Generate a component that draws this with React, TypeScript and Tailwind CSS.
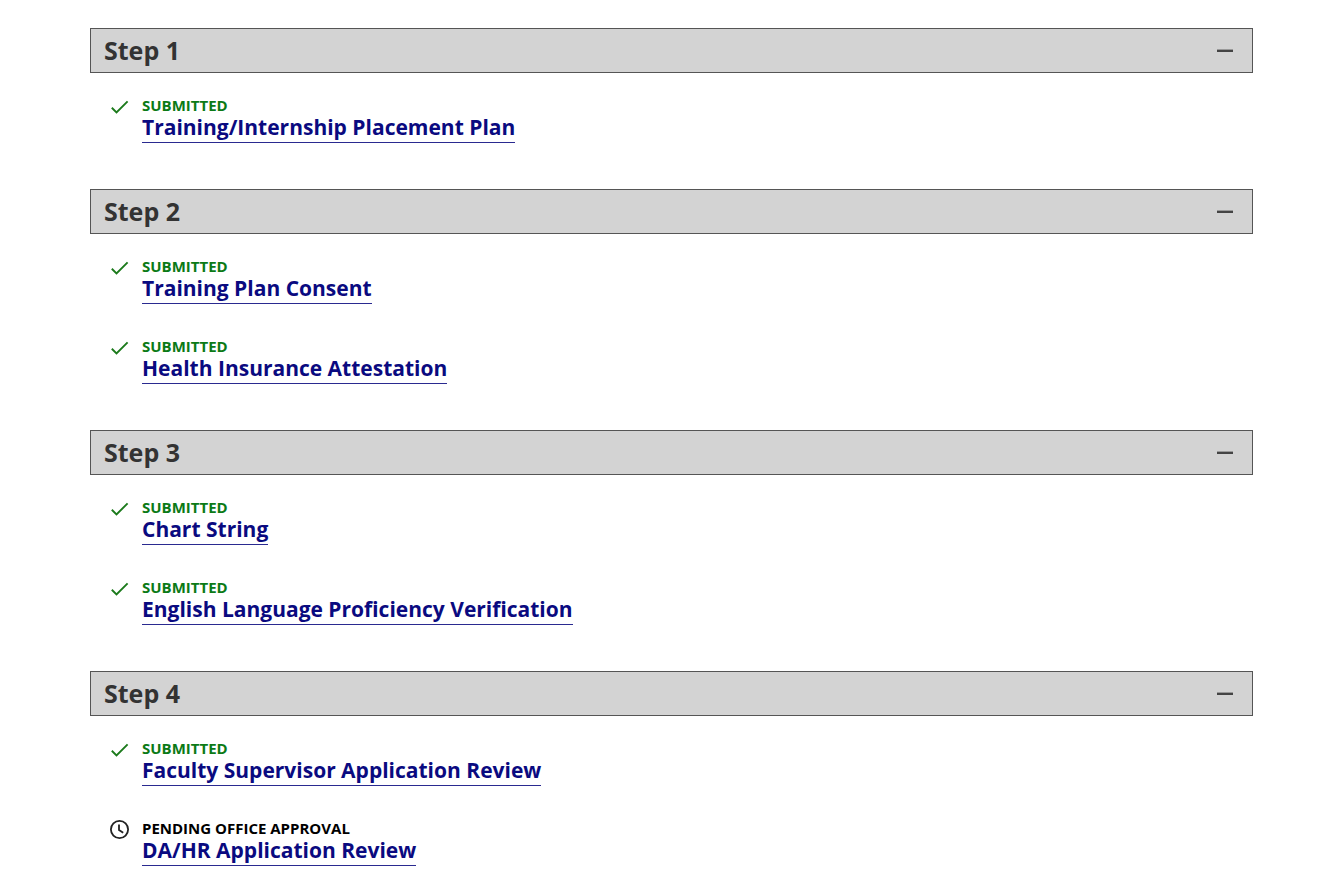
import { useState } from "react";

type Status = "submitted" | "pending";

interface Task {
  title: string;
  status: Status;
}

interface Step {
  name: string;
  tasks: Task[];
}

const steps: Step[] = [
  {
    name: "Step 1",
    tasks: [{ title: "Training/Internship Placement Plan", status: "submitted" }],
  },
  {
    name: "Step 2",
    tasks: [
      { title: "Training Plan Consent", status: "submitted" },
      { title: "Health Insurance Attestation", status: "submitted" },
    ],
  },
  {
    name: "Step 3",
    tasks: [
      { title: "Chart String", status: "submitted" },
      { title: "English Language Proficiency Verification", status: "submitted" },
    ],
  },
  {
    name: "Step 4",
    tasks: [
      { title: "Faculty Supervisor Application Review", status: "submitted" },
      { title: "DA/HR Application Review", status: "pending" },
    ],
  },
];

function CheckIcon() {
  return (
    <svg viewBox="0 0 20 20" className="h-5 w-5" fill="none" stroke="#1b7a1b" strokeWidth="1.9" aria-hidden="true">
      <path d="M1.8 10.8 L6.5 15.4 L17.6 4.4" />
    </svg>
  );
}

function ClockIcon() {
  return (
    <svg viewBox="0 0 20 20" className="h-5 w-5" fill="none" stroke="#222222" strokeWidth="1.8" aria-hidden="true">
      <circle cx="9.5" cy="9.5" r="8.6" />
      <path d="M9 4.6 V10 L13.2 12.8" />
    </svg>
  );
}

function TaskRow({ task }: { task: Task }) {
  const submitted = task.status === "submitted";
  return (
    <li className="flex gap-3">
      <span className="mt-0.5">{submitted ? <CheckIcon /> : <ClockIcon />}</span>
      <div>
        <p className={`text-[15px] leading-5 font-bold ${submitted ? "text-[#0b7a16]" : "text-black"}`}>
          {submitted ? "SUBMITTED" : "PENDING OFFICE APPROVAL"}
        </p>
        <a
          href="#"
          className="inline-block border-b border-[#2a2a90] pb-[3px] text-[21px] leading-6 font-bold text-[#0a0a80]"
        >
          {task.title}
        </a>
      </div>
    </li>
  );
}

function StepSection({ step }: { step: Step }) {
  const [open, setOpen] = useState(true);
  return (
    <section>
      <h2>
        <button
          type="button"
          aria-expanded={open}
          onClick={() => setOpen(!open)}
          className="flex h-[45px] w-full items-center justify-between border border-[#555555] bg-[#d3d3d3] pt-px pr-[19px] pl-[13px] text-[25px] font-bold text-[#333333]"
        >
          {step.name}
          <svg viewBox="0 0 16 16" className="h-4 w-4" stroke="#444444" strokeWidth="2.4" aria-hidden="true">
            <path d="M0 7.8 H16" />
            {!open && <path d="M8 0 V16" />}
          </svg>
        </button>
      </h2>
      {open && (
        <ul className="flex flex-col gap-8 pt-[22px] pb-[46px] pl-5">
          {step.tasks.map((task) => (
            <TaskRow key={task.title} task={task} />
          ))}
        </ul>
      )}
    </section>
  );
}

export default function App() {
  return (
    <main className="mx-[90px] bg-white pt-7 font-['Open_Sans',sans-serif]">
      {steps.map((step) => (
        <StepSection key={step.name} step={step} />
      ))}
    </main>
  );
}
